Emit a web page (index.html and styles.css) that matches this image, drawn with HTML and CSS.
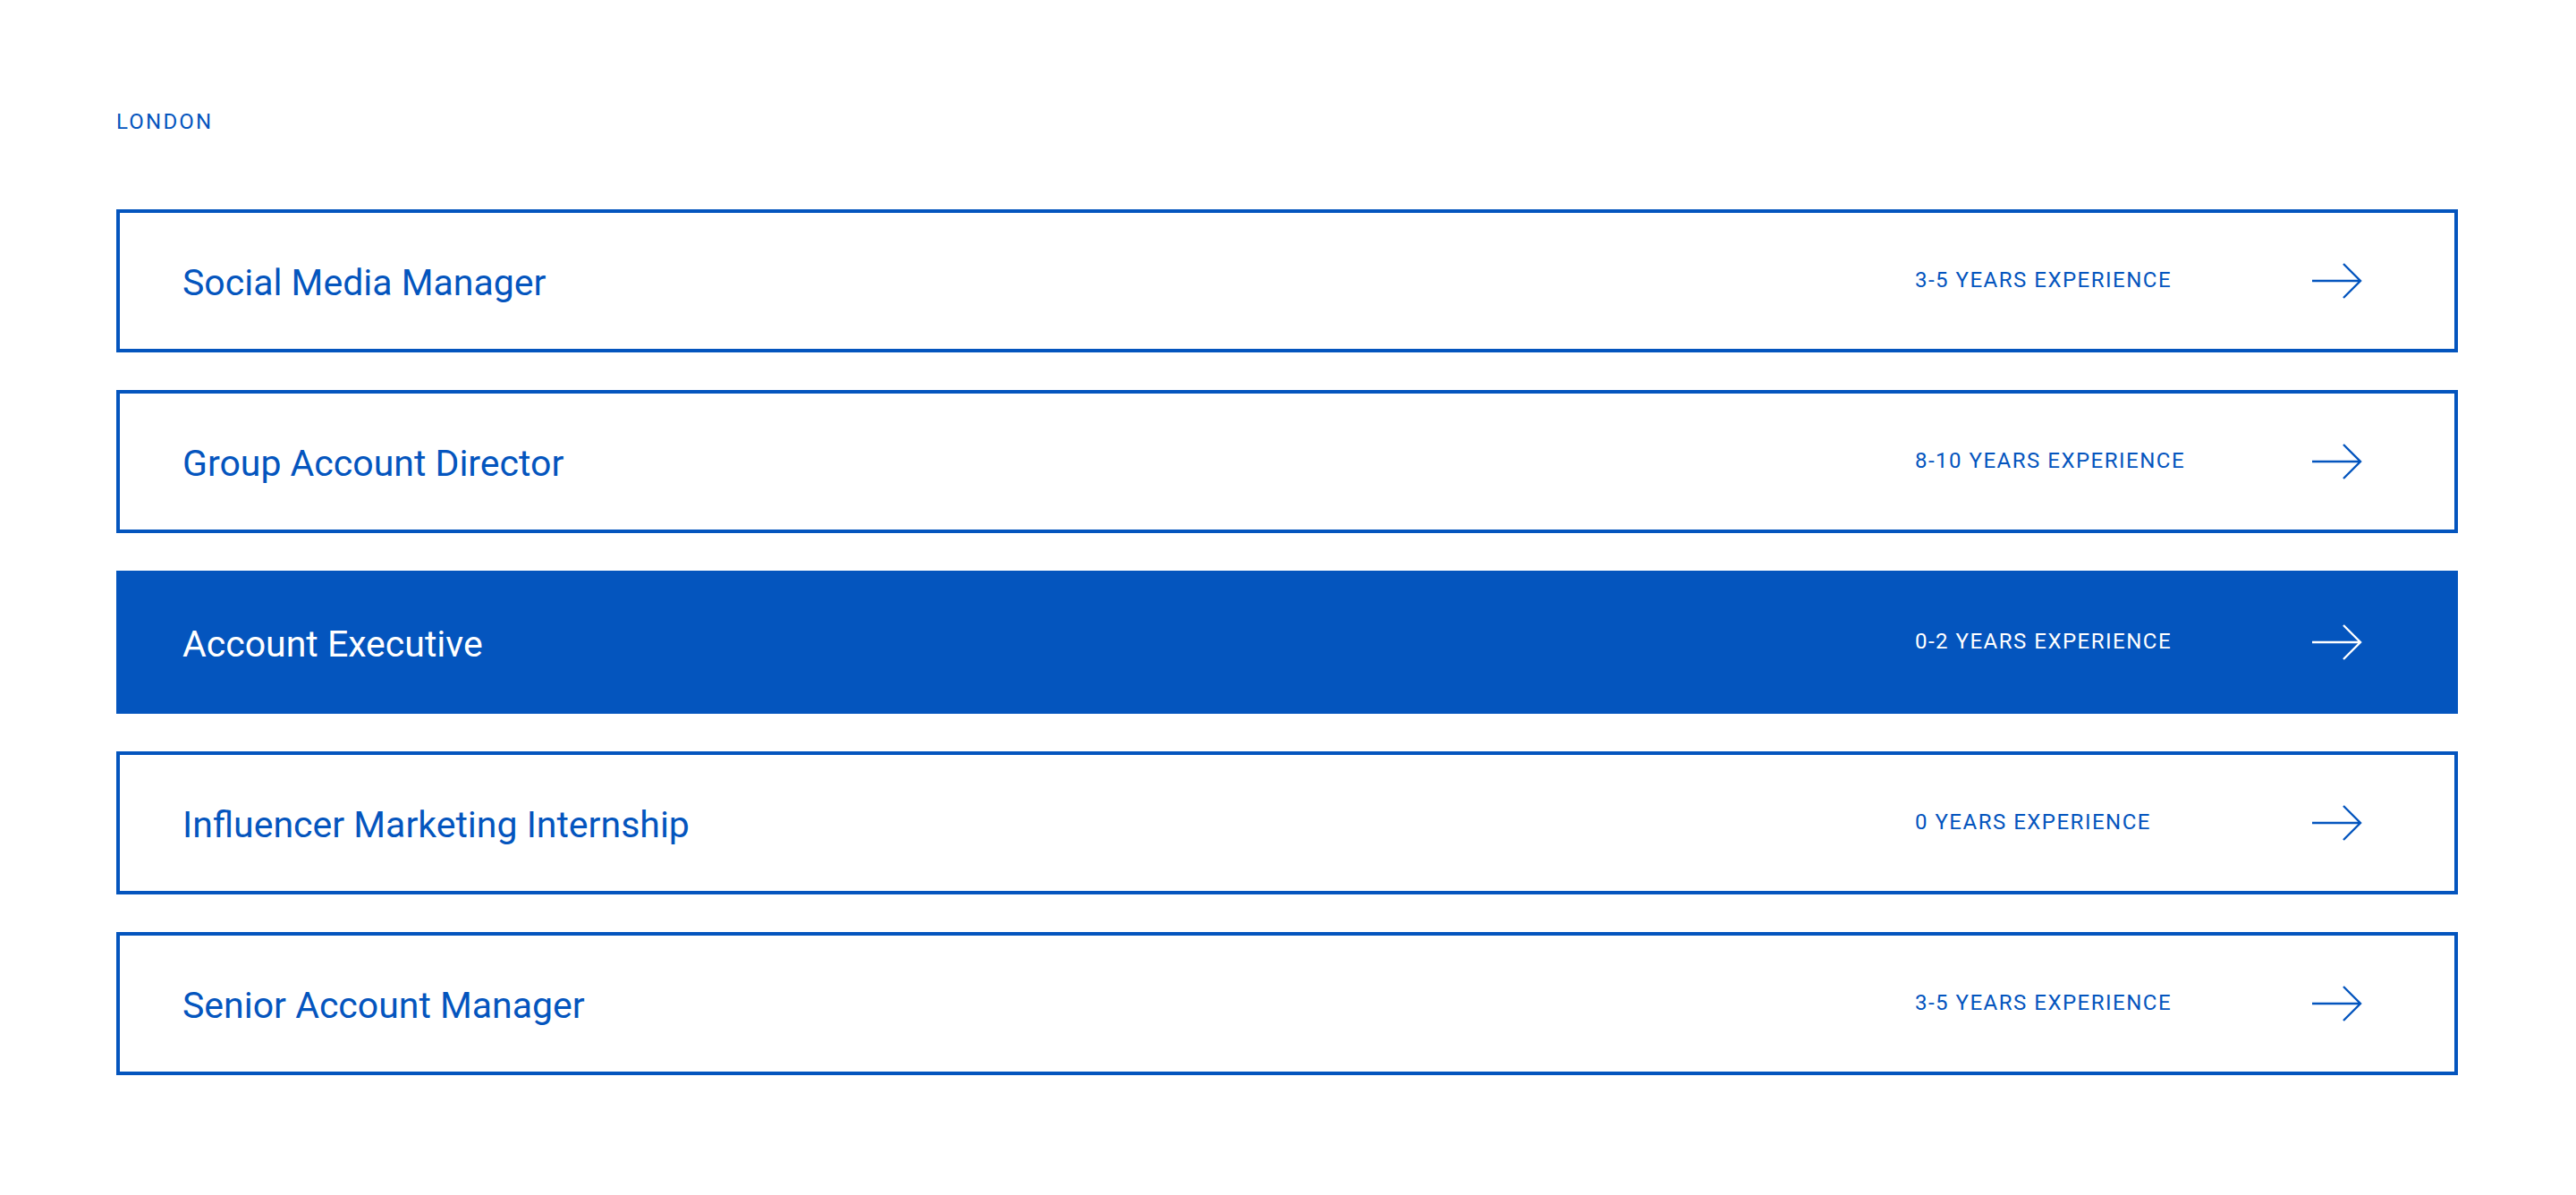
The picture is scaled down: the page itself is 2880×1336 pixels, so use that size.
FILE: index.html
```html
<!DOCTYPE html>
<html lang="en">
<head>
    <meta charset="UTF-8">
    <meta name="viewport" content="width=device-width, initial-scale=1.0">
    <title>Careers - London</title>
    <link rel="stylesheet" href="styles.css">
</head>
<body>
    <div class="jobs">
        <h2 class="city">LONDON</h2>

        <ul class="job-list">
            <li>
                <a class="job" href="#">
                    <span class="job-title">Social Media Manager</span>
                    <span class="job-exp">3-5 YEARS EXPERIENCE</span>
                    <svg class="arrow" width="56" height="40" viewBox="0 0 56 40"><path d="M0 20H54M35 1L54 20L35 39" fill="none" stroke="currentColor" stroke-width="2.4"/></svg>
                </a>
            </li>
            <li>
                <a class="job" href="#">
                    <span class="job-title">Group Account Director</span>
                    <span class="job-exp">8-10 YEARS EXPERIENCE</span>
                    <svg class="arrow" width="56" height="40" viewBox="0 0 56 40"><path d="M0 20H54M35 1L54 20L35 39" fill="none" stroke="currentColor" stroke-width="2.4"/></svg>
                </a>
            </li>
            <li>
                <a class="job active" href="#">
                    <span class="job-title">Account Executive</span>
                    <span class="job-exp">0-2 YEARS EXPERIENCE</span>
                    <svg class="arrow" width="56" height="40" viewBox="0 0 56 40"><path d="M0 20H54M35 1L54 20L35 39" fill="none" stroke="currentColor" stroke-width="2.4"/></svg>
                </a>
            </li>
            <li>
                <a class="job" href="#">
                    <span class="job-title">Influencer Marketing Internship</span>
                    <span class="job-exp">0 YEARS EXPERIENCE</span>
                    <svg class="arrow" width="56" height="40" viewBox="0 0 56 40"><path d="M0 20H54M35 1L54 20L35 39" fill="none" stroke="currentColor" stroke-width="2.4"/></svg>
                </a>
            </li>
            <li>
                <a class="job" href="#">
                    <span class="job-title">Senior Account Manager</span>
                    <span class="job-exp">3-5 YEARS EXPERIENCE</span>
                    <svg class="arrow" width="56" height="40" viewBox="0 0 56 40"><path d="M0 20H54M35 1L54 20L35 39" fill="none" stroke="currentColor" stroke-width="2.4"/></svg>
                </a>
            </li>
        </ul>
    </div>
</body>
</html>
```

FILE: styles.css
```css
body {
    margin: 0;
    font-family: Roboto, "Liberation Sans", sans-serif;
    color: #0455be;
    background-color: #fff;
}
.jobs {
    padding: 123px 132px 0 130px;
}
.city {
    margin: 0 0 85px;
    font-size: 24px;
    font-weight: 400;
    letter-spacing: 2.2px;
    line-height: 26px;
}
.job-list {
    list-style: none;
    margin: 0;
    padding: 0;
    display: flex;
    flex-direction: column;
    gap: 42px;
}
.job {
    display: flex;
    align-items: center;
    height: 160px;
    box-sizing: border-box;
    padding: 2px 103px 0 70px;
    border: 4px solid #0455be;
    color: #0455be;
    text-decoration: none;
}
.job.active {
    background-color: #0455be;
    color: #fff;
}
.job-title {
    flex: 1;
    font-size: 41px;
    margin-top: 1px;
}
.job-exp {
    width: 444px;
    font-size: 24px;
    letter-spacing: 1.5px;
    margin-top: -4px;
}
.arrow {
    display: block;
    margin-top: -2px;
}
```
